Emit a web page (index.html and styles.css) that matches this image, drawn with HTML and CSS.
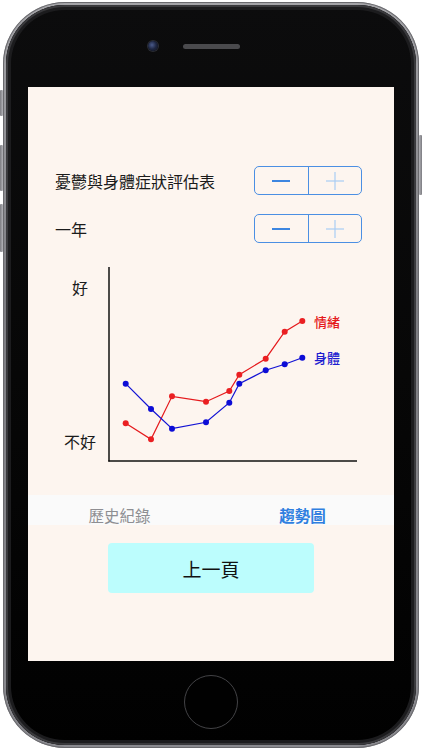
FILE: index.html
```html
<!DOCTYPE html>
<html lang="zh-Hant">
<head>
<meta charset="utf-8">
<title>趨勢圖</title>
<link rel="stylesheet" href="styles.css">
</head>
<body>
<div class="phone">
  <span class="side-btn mute"></span>
  <span class="side-btn vol-up"></span>
  <span class="side-btn vol-down"></span>
  <span class="side-btn power"></span>
  <div class="bezel">
    <div class="top">
      <span class="camera"></span>
      <span class="speaker"></span>
      <span></span>
    </div>
    <div class="screen">
      <div class="row">
        <span class="label">憂鬱與身體症狀評估表</span>
        <div class="stepper">
          <span class="half"><svg width="20" height="20" viewBox="0 0 20 20"><line x1="1" y1="10" x2="19" y2="10" class="minus"/></svg></span>
          <span class="half"><svg width="20" height="20" viewBox="0 0 20 20"><line x1="1" y1="10" x2="19" y2="10" class="plus"/><line x1="10" y1="1" x2="10" y2="19" class="plus"/></svg></span>
        </div>
      </div>
      <div class="row">
        <span class="label">一年</span>
        <div class="stepper">
          <span class="half"><svg width="20" height="20" viewBox="0 0 20 20"><line x1="1" y1="10" x2="19" y2="10" class="minus"/></svg></span>
          <span class="half"><svg width="20" height="20" viewBox="0 0 20 20"><line x1="1" y1="10" x2="19" y2="10" class="plus"/><line x1="10" y1="1" x2="10" y2="19" class="plus"/></svg></span>
        </div>
      </div>
      <svg class="chart" width="366" height="220" viewBox="28 263 366 220">
        <text x="72" y="294" class="axis-label">好</text>
        <text x="64" y="448" class="axis-label">不好</text>
        <line x1="109" y1="267" x2="109" y2="461.5" class="axis"/>
        <line x1="108.3" y1="461" x2="357" y2="461" class="axis"/>
        <polyline class="red-line" points="125.7,423.3 151,439.3 172,396.3 206,401.7 229.3,391 239.3,374.7 265.7,358.7 284.7,331.7 302.3,321"/>
        <polyline class="blue-line" points="125.7,383.7 151,409 172,428.7 206,422.3 229.3,402.7 239.3,383.7 265.7,370.3 284.7,364.3 302.3,357.7"/>
        <g class="red-dot">
          <circle cx="125.7" cy="423.3" r="3"/><circle cx="151" cy="439.3" r="3"/><circle cx="172" cy="396.3" r="3"/><circle cx="206" cy="401.7" r="3"/><circle cx="229.3" cy="391" r="3"/><circle cx="239.3" cy="374.7" r="3"/><circle cx="265.7" cy="358.7" r="3"/><circle cx="284.7" cy="331.7" r="3"/><circle cx="302.3" cy="321" r="3"/>
        </g>
        <g class="blue-dot">
          <circle cx="125.7" cy="383.7" r="3"/><circle cx="151" cy="409" r="3"/><circle cx="172" cy="428.7" r="3"/><circle cx="206" cy="422.3" r="3"/><circle cx="229.3" cy="402.7" r="3"/><circle cx="239.3" cy="383.7" r="3"/><circle cx="265.7" cy="370.3" r="3"/><circle cx="284.7" cy="364.3" r="3"/><circle cx="302.3" cy="357.7" r="3"/>
        </g>
        <text x="314" y="327" class="legend red-text">情緒</text>
        <text x="314" y="363" class="legend blue-text">身體</text>
      </svg>
      <div class="tabbar">
        <span class="tab">歷史紀錄</span>
        <span class="tab active">趨勢圖</span>
      </div>
      <div class="btn-wrap">
        <button class="back-btn">上一頁</button>
      </div>
    </div>
    <div class="bottom">
      <span class="home"></span>
    </div>
  </div>
</div>
</body>
</html>
```
FILE: styles.css
```css
* { box-sizing: border-box; }
html, body {
  margin: 0;
  padding: 0;
  background: #ffffff;
}
body {
  width: 422px;
  height: 750px;
  overflow: hidden;
  font-family: "Noto Sans CJK TC", "Noto Sans", sans-serif;
}
.phone {
  position: relative;
  margin: 2px 0 0 3px;
  width: 416px;
  height: 746px;
  border-radius: 62px;
  padding: 3px;
  background: linear-gradient(180deg, #a4a4a8 0%, #7e7e83 40%, #8a8a8f 100%);
  box-shadow: inset 0 0 0 1px #6a6a6e;
}
.side-btn {
  position: absolute;
  width: 3px;
  background: linear-gradient(90deg, #7b7b80, #b4b4b9);
  border-radius: 1px;
}
.mute { left: -3px; top: 88px; height: 26px; }
.vol-up { left: -3px; top: 143px; height: 46px; }
.vol-down { left: -3px; top: 202px; height: 48px; }
.power { right: -3px; top: 133px; height: 60px; background: linear-gradient(90deg, #b4b4b9, #7b7b80); }
.bezel {
  width: 410px;
  height: 740px;
  border-radius: 59px;
  background: linear-gradient(180deg, #0c0c0d 0%, #070707 50%, #010101 100%);
  box-shadow: inset 0 0 0 2px #3a3a3d, inset 0 0 0 5px #1c1c1e;
  padding: 0 22px;
  display: flex;
  flex-direction: column;
}
.top {
  height: 82px;
  display: grid;
  grid-template-columns: 1fr auto 1fr;
  align-items: start;
  padding-top: 36px;
}
.camera {
  justify-self: end;
  margin-right: 25px;
  width: 10px;
  height: 10px;
  border-radius: 50%;
  background: radial-gradient(circle at 40% 40%, #4a5a8a 0%, #1d2540 50%, #121520 100%);
  box-shadow: 0 0 0 1px #2a2c33;
}
.speaker {
  margin-top: 3px;
  width: 57px;
  height: 5px;
  border-radius: 3px;
  background: #4a4a4d;
}
.screen {
  width: 366px;
  height: 574px;
  background: #fdf5ef;
  padding-top: 79px;
  display: flex;
  flex-direction: column;
}
.row {
  display: flex;
  align-items: center;
  justify-content: space-between;
  padding: 0 32px 0 27px;
  height: 29px;
}
.row + .row { margin-top: 19px; }
.label {
  font-size: 16px;
  color: #1b1b1b;
  line-height: 1;
}
.stepper {
  width: 108px;
  height: 29px;
  border: 1px solid #4b8fe3;
  border-radius: 5px;
  display: flex;
}
.half {
  flex: 1;
  display: flex;
  align-items: center;
  justify-content: center;
}
.half + .half { border-left: 1px solid #4b8fe3; }
.minus { stroke: #3d86e0; stroke-width: 2; }
.plus { stroke: #a9cdf4; stroke-width: 1.2; }
.chart {
  display: block;
  margin-top: 20px;
}
.axis { stroke: #111; stroke-width: 1.5; }
.axis-label { font-size: 16px; fill: #1b1b1b; font-family: "Noto Sans CJK TC", sans-serif; }
.red-line { fill: none; stroke: #e5191c; stroke-width: 1.2; }
.blue-line { fill: none; stroke: #1212d4; stroke-width: 1.2; }
.red-dot { fill: #ea1f22; }
.blue-dot { fill: #0c0cd6; }
.legend { font-size: 13px; font-family: "Noto Sans CJK TC", sans-serif; font-weight: 500; }
.red-text { fill: #e5191c; }
.blue-text { fill: #1d1dd0; }
.tabbar {
  margin-top: 12px;
  height: 30px;
  background: #fafafa;
  display: flex;
  align-items: flex-end;
  padding-bottom: 2px;
}
.tab {
  flex: 1;
  text-align: center;
  font-size: 15.5px;
  line-height: 16px;
  color: #8e8e92;
}
.tab.active {
  color: #2f7fe0;
  font-weight: 700;
}
.btn-wrap {
  margin-top: 18px;
  display: flex;
  justify-content: center;
}
.back-btn {
  width: 206px;
  height: 50px;
  border: none;
  border-radius: 4px;
  background: #bcfdfd;
  font-family: "Noto Sans CJK TC", sans-serif;
  font-size: 19px;
  color: #111;
  padding: 0;
}
.bottom {
  flex: 1;
  display: flex;
  justify-content: center;
  padding-top: 14px;
}
.home {
  width: 54px;
  height: 54px;
  border-radius: 50%;
  border: 1.5px solid #434346;
  background: #010101;
}
```
